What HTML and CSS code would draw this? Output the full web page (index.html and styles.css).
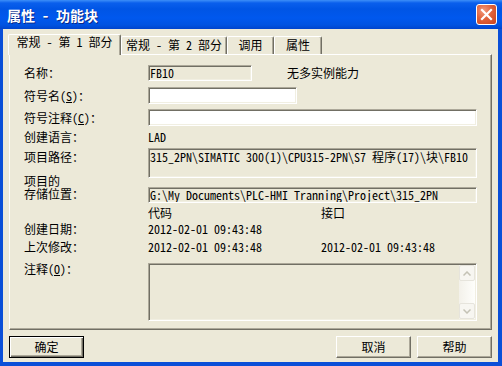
FILE: index.html
```html
<!DOCTYPE html>
<html lang="zh-CN">
<head>
    <meta charset="UTF-8">
    <title>属性 - 功能块</title>
    <link rel="stylesheet" href="styles.css">
</head>
<body>
    <div class="window">
        <div class="titlebar">
            <span class="title">属性 - 功能块</span>
            <div class="close">
                <svg width="13" height="13" viewBox="0 0 13 13">
                    <path d="M2 2 L11 11 M11 2 L2 11" stroke="#fff" stroke-width="2.2" stroke-linecap="square"/>
                </svg>
            </div>
        </div>
        <div class="frame">
            <div class="tabs">
                <div class="tab active tab-1">常规 - 第 1 部分</div>
                <div class="tab tab-2">常规 - 第 2 部分</div>
                <div class="tab tab-3">调用</div>
                <div class="tab tab-4">属性</div>
            </div>
            <div class="panel">
                <div class="row row-name">
                    <span class="label">名称：</span>
                    <div class="field ro w-s">FB10</div>
                    <span class="note">无多实例能力</span>
                </div>
                <div class="row row-symbol">
                    <span class="label">符号名(<u>S</u>)：</span>
                    <div class="field w-m tall"></div>
                </div>
                <div class="row row-comment">
                    <span class="label">符号注释(<u>C</u>)：</span>
                    <div class="field w-l tall"></div>
                </div>
                <div class="row row-lang">
                    <span class="label">创建语言：</span>
                    <span>LAD</span>
                </div>
                <div class="row row-path">
                    <span class="label">项目路径：</span>
                    <div class="field ro w-l multi">315_2PN\SIMATIC 300(1)\CPU315-2PN\S7 程序(17)\块\FB10</div>
                </div>
                <div class="row row-store">
                    <div class="label two-line">
                        <div>项目的</div>
                        <div>存储位置：</div>
                    </div>
                    <div class="field ro w-l">G:\My Documents\PLC-HMI Tranning\Project\315_2PN</div>
                </div>
                <div class="row row-head">
                    <span class="label"></span>
                    <span class="col">代码</span>
                    <span>接口</span>
                </div>
                <div class="row row-created">
                    <span class="label">创建日期：</span>
                    <span class="col">2012-02-01 09:43:48</span>
                </div>
                <div class="row row-modified">
                    <span class="label">上次修改：</span>
                    <span class="col">2012-02-01 09:43:48</span>
                    <span>2012-02-01 09:43:48</span>
                </div>
                <div class="row row-note">
                    <span class="label">注释(<u>O</u>)：</span>
                    <div class="field ro w-l memo">
                        <div class="scroll">
                            <div class="sb-btn">
                                <svg width="8" height="5" viewBox="0 0 8 5"><path d="M0.5 4.5 L4 1 L7.5 4.5" fill="none" stroke="#c4c2b5" stroke-width="1.5"/></svg>
                            </div>
                            <div class="sb-btn">
                                <svg width="8" height="5" viewBox="0 0 8 5"><path d="M0.5 0.5 L4 4 L7.5 0.5" fill="none" stroke="#c4c2b5" stroke-width="1.5"/></svg>
                            </div>
                        </div>
                    </div>
                </div>
            </div>
            <div class="buttons">
                <div class="btn default">确定</div>
                <div class="btn push-right">取消</div>
                <div class="btn">帮助</div>
            </div>
        </div>
    </div>
</body>
</html>
```

FILE: styles.css
```css
/* styles.css */
body {
    margin: 0;
    font-family: "Noto Sans Mono CJK SC", "Noto Sans CJK SC", monospace;
    font-size: 12px;
    line-height: 14px;
    color: #000;
    background-color: #ece9d8;
}

.window {
    width: 502px;
    height: 366px;
    display: flex;
    flex-direction: column;
}

.titlebar {
    box-sizing: border-box;
    height: 29px;
    flex: none;
    display: flex;
    align-items: center;
    justify-content: space-between;
    padding: 0 5px 0 7px;
    background: linear-gradient(to bottom, #3d8ff8 0, #0a5fec 3px, #0055e5 9px, #0058ee 18px, #0053e1 25px, #0044cc 29px);
}

.title {
    font-size: 14px;
    font-weight: bold;
    color: #fff;
    white-space: pre;
    text-shadow: 1px 1px #0b2a8a;
}

.close {
    box-sizing: border-box;
    width: 21px;
    height: 21px;
    display: flex;
    align-items: center;
    justify-content: center;
    border: 1px solid #fff;
    border-radius: 3px;
    background: radial-gradient(circle at 35% 30%, #f29a7c 0, #e0633c 45%, #c9431c 100%);
}

.frame {
    flex: 1;
    display: flex;
    flex-direction: column;
    border: solid #0a4fd8;
    border-width: 0 4px 4px 3px;
}

/* tabs */
.tabs {
    display: flex;
    align-items: flex-end;
    height: 20px;
    margin: 5px 0 0 5px;
}

.tab {
    box-sizing: border-box;
    height: 18px;
    padding-top: 1px;
    border: 1px solid;
    border-color: #fff #716f64 transparent #fff;
    border-bottom: none;
    border-radius: 2px 2px 0 0;
    box-shadow: inset -1px 0 #aca899;
    background-color: #ece9d8;
    text-align: center;
    white-space: pre;
}

.tab.active {
    position: relative;
    z-index: 1;
    height: 21px;
    margin-bottom: -1px;
    padding-top: 0;
}

.tab-1 { width: 113px; }
.tab-2 { width: 106px; }
.tab-3 { width: 47px; }
.tab-4 { width: 48px; }

/* page */
.panel {
    box-sizing: border-box;
    width: 483px;
    height: 276px;
    margin-left: 6px;
    padding-left: 14px;
    border: 1px solid;
    border-color: #fff #716f64 #716f64 #fff;
    box-shadow: inset -1px -1px #aca899;
}

.row {
    display: flex;
    align-items: center;
    white-space: pre;
}

.label {
    width: 124px;
    flex: none;
}

.col {
    width: 173px;
    flex: none;
}

.note {
    margin-left: 35px;
}

.field {
    box-sizing: border-box;
    height: 16px;
    padding: 0 1px;
    border: 1px solid;
    border-color: #aca899 #fff #fff #aca899;
    box-shadow: inset 1px 1px #716f64, inset -1px -1px #f1efe2;
    background-color: #fff;
    line-height: 14px;
    overflow: hidden;
}

.field.ro {
    background-color: #ece9d8;
}

.field.tall {
    height: 17px;
}

.w-s { width: 104px; }
.w-m { width: 149px; }
.w-l { width: 329px; }

.row-name { margin-top: 10px; }
.row-symbol { margin-top: 6px; }
.row-comment { margin-top: 5px; }
.row-lang { margin-top: 4px; }

.row-path {
    margin-top: 4px;
    align-items: flex-start;
}

.row-path .label {
    padding-top: 2px;
}

.field.multi {
    height: 30px;
    padding-top: 1px;
}

.row-store {
    margin-top: -4px;
    align-items: flex-start;
}

.label.two-line {
    line-height: 13px;
    white-space: normal;
}

.row-store .field {
    margin-top: 13px;
}

.row-head { margin-top: 3px; }
.row-created { margin-top: 2px; }
.row-modified { margin-top: 4px; }

.row-note {
    margin-top: 9px;
    align-items: flex-start;
}

.row-note .label {
    margin-top: -1px;
}

.field.memo {
    height: 58px;
    display: flex;
    justify-content: flex-end;
    padding: 1px 1px 1px 0;
}

.scroll {
    width: 16px;
    display: flex;
    flex-direction: column;
    justify-content: space-between;
    background: linear-gradient(to right, #f3f1ea, #fefefb);
}

.sb-btn {
    box-sizing: border-box;
    height: 16px;
    display: flex;
    align-items: center;
    justify-content: center;
    border: 1px solid #e6e4dc;
    border-radius: 2px;
    background-color: #f7f6f1;
}

/* buttons */
.buttons {
    display: flex;
    width: 483px;
    margin: 6px 0 0 6px;
}

.btn {
    box-sizing: border-box;
    width: 75px;
    height: 22px;
    display: flex;
    align-items: center;
    justify-content: center;
    border: 1px solid;
    border-color: #fff #716f64 #716f64 #fff;
    box-shadow: inset -1px -1px #aca899;
}

.btn.default {
    border-color: #000;
    box-shadow: inset 1px 1px #fff, inset -1px -1px #716f64, inset -2px -2px #aca899;
}

.push-right {
    margin-left: auto;
    margin-right: 6px;
}
```
